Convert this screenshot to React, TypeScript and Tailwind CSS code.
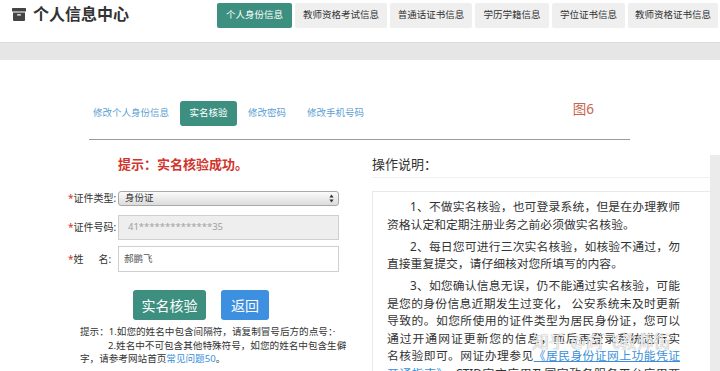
import React from "react";

const topTabs = [
  { label: "个人身份信息", w: "w-[75px]", active: true },
  { label: "教师资格考试信息", w: "w-[92px]" },
  { label: "普通话证书信息", w: "w-[82px]" },
  { label: "学历学籍信息", w: "w-[74px]" },
  { label: "学位证书信息", w: "w-[73px]" },
  { label: "教师资格证书信息", w: "w-[90px]" },
];

function ArchiveIcon() {
  return (
    <svg width="14" height="13" viewBox="0 0 14 13" className="shrink-0">
      <rect x="0" y="0" width="14" height="3.5" rx="0.6" fill="#444" />
      <path d="M1 4.6h12v7.4a1 1 0 0 1-1 1H2a1 1 0 0 1-1-1z" fill="#444" />
      <rect x="5" y="6.2" width="4" height="1.3" rx="0.6" fill="#fff" />
    </svg>
  );
}

function SelectArrows() {
  return (
    <svg width="5" height="9" viewBox="0 0 5 9">
      <path d="M2.5 0.5L4.6 3.4H0.4z" fill="#333" />
      <path d="M2.5 8.5L4.6 5.6H0.4z" fill="#333" />
    </svg>
  );
}

function Label({ children }: { children: React.ReactNode }) {
  return (
    <span className="w-[50px] shrink-0 text-[10px] text-[#333] whitespace-nowrap">
      <span className="text-[#d0342c]">*</span>
      {children}
    </span>
  );
}

// one justified line of the notes panel
function J({ children, first }: { children: React.ReactNode; first?: boolean }) {
  return (
    <div className={`text-justify [text-align-last:justify] ${first ? "indent-[23px]" : ""}`}>
      {children}
    </div>
  );
}

function L({ children }: { children: React.ReactNode }) {
  return <div>{children}</div>;
}

export default function App() {
  return (
    <div className="relative w-[720px] h-[371px] overflow-hidden bg-white text-[#333] font-['Noto_Sans','Noto_Sans_CJK_SC',sans-serif]">
      <header className="h-[42px] flex items-start justify-between pl-[12px] pr-[2px]">
        <div className="flex items-center gap-[7px] h-[28px]">
          <ArchiveIcon />
          <span className="text-[16px] font-bold text-[#333]">个人信息中心</span>
        </div>
        <nav className="flex gap-[3px] pt-[3px]">
          {topTabs.map((t) => (
            <div
              key={t.label}
              className={`${t.w} h-[25px] flex items-center justify-center rounded-[2px] text-[9.5px] ${
                t.active ? "bg-[#3d8f80] text-white" : "bg-[#efefef] text-[#333]"
              }`}
            >
              {t.label}
            </div>
          ))}
        </nav>
      </header>

      <div className="h-[18px] bg-[#e6e6e6] border-t border-[#dcdcdc]" />

      <div className="ml-[89px] w-[541px] mt-[41px] pb-[13px] border-b-[1.5px] border-[#9a9a9a] flex items-center">
        <span className="ml-[4px] text-[9.5px] text-[#5aa0d2]">修改个人身份信息</span>
        <span className="ml-[11px] w-[57px] h-[25px] flex items-center justify-center rounded-[3px] bg-[#3d8f80] text-white text-[9.5px]">
          实名核验
        </span>
        <span className="ml-[11px] text-[9.5px] text-[#5aa0d2]">修改密码</span>
        <span className="ml-[21px] text-[9.5px] text-[#5aa0d2]">修改手机号码</span>
        <span className="ml-auto mr-[36px] -mt-[8px] text-[13.5px] text-[#c8634f]">图6</span>
      </div>

      <div className="flex">
        <div className="w-[372px] shrink-0">
          <div className="mt-[16px] pl-[118px] text-[13px] leading-[16px] font-bold text-[#d0342c]">
            提示：实名核验成功。
          </div>

          <div className="pl-[68px] mt-[19px] flex items-center h-[15px]">
            <Label>证件类型:</Label>
            <div className="w-[221px] h-[15px] flex items-center justify-between pl-[6px] pr-[4px] rounded-[3px] border border-[#a9a9a9] bg-linear-to-b from-[#fbfbfb] to-[#dcdcdc] text-[9.5px] text-[#333]">
              <span>身份证</span>
              <SelectArrows />
            </div>
          </div>

          <div className="pl-[68px] mt-[9px] flex items-center h-[25px]">
            <Label>证件号码:</Label>
            <div className="w-[221px] h-[25px] flex items-center pl-[9px] border border-[#cfcfcf] bg-[#eeeeee] text-[9.5px] text-[#a0a0a0]">
              41**************35
            </div>
          </div>

          <div className="pl-[68px] mt-[6px] flex items-center h-[26px]">
            <Label>
              姓<span className="inline-block w-[15px]" />名:
            </Label>
            <div className="w-[221px] h-[26px] flex items-center pl-[5px] border border-[#cfcfcf] bg-white text-[9.5px] text-[#555]">
              郝鹏飞
            </div>
          </div>

          <div className="mt-[18px] pl-[133px] flex gap-[15px]">
            <button className="w-[73px] h-[30px] rounded-[3px] bg-[#3d8f80] text-white text-[14px]">实名核验</button>
            <button className="w-[48px] h-[30px] rounded-[3px] bg-[#3d8fe0] text-white text-[14px]">返回</button>
          </div>

          <div className="mt-[5px] ml-[80px] w-[269px] text-[9.6px] leading-[13.5px] text-[#333]">
            <div>提示：1.如您的姓名中包含间隔符，请复制冒号后方的点号：·</div>
            <div className="indent-[28px]">
              2.姓名中不可包含其他特殊符号，如您的姓名中包含生僻字，请参考网站首页
              <span className="text-[#3a8fd8]">常见问题50</span>。
            </div>
          </div>
        </div>

        <div className="w-[338px] shrink-0">
          <div className="mt-[17px] pb-[5px] border-b border-[#f0f0f0] text-[13px] leading-[15px] text-[#333]">
            操作说明：
          </div>
          <div className="mt-[13px] h-[200px] border-l border-t border-[#e9e9e9] pl-[14px] pt-[6px]">
            <div className="w-[293px] text-[11.8px] leading-[17.5px] text-[#333]">
              <J first>1、不做实名核验，也可登录系统，但是在办理教师</J>
              <L>资格认定和定期注册业务之前必须做实名核验。</L>
              <div className="mt-[4.5px]" />
              <J first>2、每日您可进行三次实名核验，如核验不通过，勿</J>
              <L>直接重复提交，请仔细核对您所填写的内容。</L>
              <div className="mt-[4.5px]" />
              <J first>3、如您确认信息无误，仍不能通过实名核验，可能</J>
              <J>是您的身份信息近期发生过变化， 公安系统未及时更新</J>
              <J>导致的。如您所使用的证件类型为居民身份证，您可以</J>
              <J>通过开通网证更新您的信息，而后再登录系统进行实</J>
              <J>
                名核验即可。网证办理参见<span className="text-[#3a8fd8] underline">《居民身份证网上功能凭证</span>
              </J>
              <J>
                <span className="text-[#3a8fd8] underline">开通指南》</span>，CTID官方应用及国家政务服务平台应用两
              </J>
            </div>
          </div>
        </div>

        <div className="w-[10px] mt-[15px] h-[220px] bg-[#ebebeb]" />
      </div>

      <div className="absolute left-[532px] top-[329px] text-[17px] text-white/90 [text-shadow:0_0_1px_rgba(0,0,0,0.55)] pointer-events-none">
        知乎 @向飞教师街
      </div>
    </div>
  );
}
